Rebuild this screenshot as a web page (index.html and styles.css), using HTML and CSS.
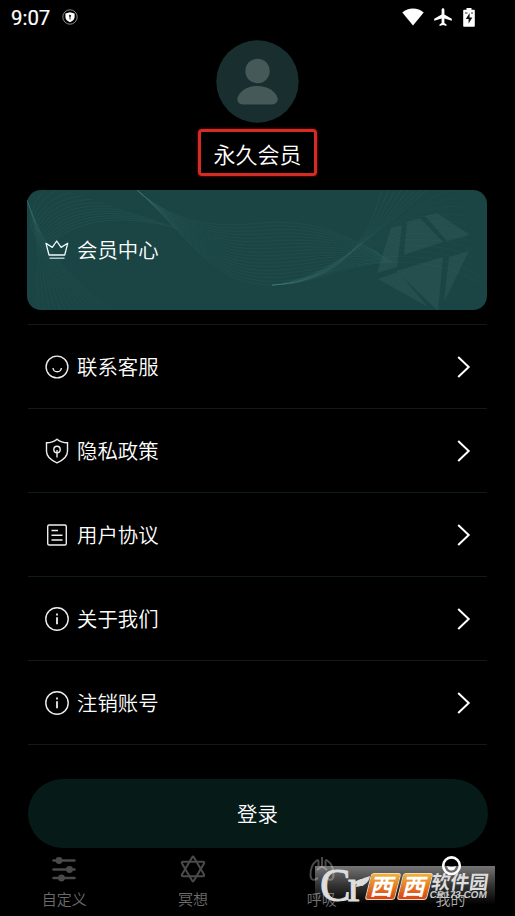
FILE: index.html
```html
<!DOCTYPE html>
<html lang="zh-CN">
<head>
<meta charset="utf-8">
<title>我的</title>
<link rel="stylesheet" href="styles.css">
</head>
<body>
<div class="screen">
  <header class="status">
    <span class="time">9:07</span>
    <svg class="status-shield" width="16" height="16" viewBox="0 0 16 16"><circle cx="8" cy="8" r="7.2" fill="none" stroke="#aaa" stroke-width=".8"/><path d="M8 3.200l4.600 1.300v3.600c0 2.500-2.100 4.200-4.600 5.100-2.500-.9-4.600-2.600-4.600-5.100V4.500z" fill="#fff"/><circle cx="8" cy="6.800" r="1.100" fill="#222"/><path d="M8 7v3.500" stroke="#222"/></svg>
    <span class="status-icons">
      <svg width="22" height="18" viewBox="0 0 22 18"><path d="M11 17.600L.3 4.600C3.300 2 7 .6 11 .6s7.700 1.400 10.700 4z" fill="#fff"/></svg>
      <svg width="18" height="18" viewBox="0 0 18 18"><path d="M9 .2c.8 0 1.400.7 1.400 1.500v4.700l7.400 4.400v1.900l-7.400-2.200v4.400l2.100 1.500v1.500L9 16.900l-3.500 1v-1.500l2.100-1.500v-4.400L.2 12.700v-1.900l7.400-4.400V1.700C7.600.9 8.200.2 9 .2z" fill="#fff"/></svg>
      <svg width="12" height="19" viewBox="0 0 12 19"><path d="M3.500 0h5v1.800h2.300c.6 0 1 .4 1 1v14.900c0 .6-.4 1-1 1H1.200c-.6 0-1-.4-1-1V2.800c0-.6.4-1 1-1h2.300z" fill="#fff"/><path d="M6.600 5L2.800 11h2.800v4.500L9.400 9.500H6.600z" fill="#111"/><path d="M2 5h2.500M8 5h2" stroke="#333"/></svg>
    </span>
  </header>

  <section class="profile">
    <svg class="avatar" width="83" height="83" viewBox="0 0 83 83"><circle cx="41.500" cy="41.500" r="41.200" fill="#192f2f"/><circle cx="41.500" cy="31" r="12.200" fill="#465959"/><path d="M27 64.500c-5.500 0-7-5-4.500-9C26 49.500 33 46 41.500 46S57 49.500 60.500 55.500c2.500 4 1 9-4.500 9z" fill="#465959"/></svg>
    <div class="nickname">永久会员</div>
  </section>

  <section class="vip">
    <svg class="vip-art" width="460" height="120" viewBox="0 0 460 120">
      <g fill="#254f4e">
        <path d="M364 38l11-3-5 42-20 6z"/>
        <path d="M380 32l13-4 23 24-39 13z"/>
        <path d="M398 26l12-3 33 22-23 6z"/>
        <path d="M351 89l20-7 30 35z"/>
        <path d="M369 81l47-14-5 54z"/>
        <path d="M422 67l20-6-25 51z"/>
      </g>
      <g id="waves" class="waves"></g>
    </svg>
    <svg class="vip-crown" width="24" height="20" viewBox="0 0 24 20"><path d="M4 15L1 3.300l6.300 4.100L11.700 1l4.400 6.400L22.700 3.300 19.700 15z" fill="none" stroke="#eefafa" stroke-width="1.300" stroke-linejoin="round"/><path d="M4.500 18.200h15" stroke="#c5dada" stroke-width="1.300"/></svg>
    <span>会员中心</span>
  </section>

  <nav class="menu">
    <a class="row"><svg class="row-icon" viewBox="0 0 24 24"><circle cx="12" cy="12" r="10.900"/><path d="M8 13c.4 2.500 2 3.800 4.200 3.800s3.800-1.300 4.200-3.800"/></svg><span>联系客服</span><svg class="chevron" viewBox="0 0 14 22"><path d="M1.200 1l10.500 10L1.200 21"/></svg></a>
    <a class="row"><svg class="row-icon tall" viewBox="0 0 24 26"><path d="M12 1.200c3 2.500 6.500 3.600 10.500 3.600v8.500c0 5.500-4.500 9-10.500 11.500C6 22.300 1.500 18.800 1.500 13.300V4.800c4 0 7.500-1.100 10.500-3.600z"/><circle cx="12" cy="11.500" r="3.200"/><path d="M12 12v7.500"/></svg><span>隐私政策</span><svg class="chevron" viewBox="0 0 14 22"><path d="M1.200 1l10.500 10L1.200 21"/></svg></a>
    <a class="row"><svg class="row-icon" viewBox="0 0 24 24"><rect x="2.700" y="2" width="18.600" height="20" rx="1.500"/><path d="M6.500 7.500h6.500M6.500 12.300h11M6.500 17h11"/></svg><span>用户协议</span><svg class="chevron" viewBox="0 0 14 22"><path d="M1.200 1l10.500 10L1.200 21"/></svg></a>
    <a class="row"><svg class="row-icon" viewBox="0 0 24 24"><circle cx="12" cy="12" r="11.200"/><path d="M12 6.500v2M12 10.300v7" stroke-width="1.800"/></svg><span>关于我们</span><svg class="chevron" viewBox="0 0 14 22"><path d="M1.200 1l10.500 10L1.200 21"/></svg></a>
    <a class="row"><svg class="row-icon" viewBox="0 0 24 24"><circle cx="12" cy="12" r="11.200"/><path d="M12 6.500v2M12 10.300v7" stroke-width="1.800"/></svg><span>注销账号</span><svg class="chevron" viewBox="0 0 14 22"><path d="M1.200 1l10.500 10L1.200 21"/></svg></a>
  </nav>

  <button class="login"><span>登录</span></button>

  <footer class="tabs">
    <div class="tab"><svg viewBox="0 0 28 28"><path d="M3.500 5.500h21M3.500 14.500h21M3.500 23h21" stroke-width="2.500" stroke-linecap="round"/><g fill="#4a4a4a" stroke="none"><circle cx="9" cy="5.500" r="3.400"/><circle cx="19.500" cy="14.500" r="3.400"/><circle cx="11.500" cy="23" r="3.400"/></g></svg><span>自定义</span></div>
    <div class="tab"><svg viewBox="0 0 28 28"><path d="M13.200 2.200L3 19.500q-.8 1.700 1 1.700h20q1.800 0 1-1.700L14.800 2.200q-.8-1.200-1.600 0z"/><path d="M13.200 25.800L3 8.500q-.8-1.700 1-1.700h20q1.800 0 1 1.700L14.800 25.800q-.8 1.200-1.600 0z"/></svg><span>冥想</span></div>
    <div class="tab"><svg viewBox="0 0 28 28"><path d="M14 2v9M14 11l-5 4M14 11l5 4M10.500 11V6.500q0-2-2-.8C4.500 8.500 2.500 14 2.500 20c0 4 2 5.500 4.500 4.500l3-1.500M17.500 11V6.500q0-2 2-.8c4 2.800 6 8.300 6 14.300 0 4-2 5.500-4.500 4.500l-3-1.500"/></svg><span>呼吸</span></div>
    <div class="tab active"><svg viewBox="0 0 28 28"><circle cx="14.500" cy="10.700" r="8.300"/><path d="M10 11q1 4.500 4.500 4.500T19 11q-4.500 2.200-9 0z" fill="#fff" stroke="none"/></svg><span>我的</span></div>
  </footer>

  <aside class="watermark">
    <span class="mark-cr">Cr</span>
    <svg class="leaf" width="14" height="12" viewBox="0 0 14 12"><path d="M0 11C1 3 6 3 14 0c-1 7-6 10-14 11z" fill="#ddd"/></svg>
    <span class="tile">西</span><span class="tile">西</span>
    <span class="mark-name"><b>软件园</b><i>CR173.COM</i></span>
  </aside>
</div>
<script src="waves.js"></script>
</body>
</html>
```
FILE: styles.css
```css
* { box-sizing: border-box; }
body {
  margin: 0;
  background: #000;
  color: #fff;
  font-family: "Noto Sans CJK SC", sans-serif;
  font-weight: 350;
}
svg { display: block; flex: none; }
.screen {
  position: relative;
  width: 515px;
  height: 916px;
  overflow: hidden;
  display: flex;
  flex-direction: column;
}
.status {
  height: 40px;
  padding: 0 39px 6px 11px;
  display: flex;
  align-items: center;
}
.time { font: 400 20.4px/24px Roboto, sans-serif; width: 39px; margin-top: 2px; -webkit-text-stroke: .2px #fff; }
.status-shield { margin-left: 12px; }
.status-icons { margin-left: auto; display: flex; align-items: center; gap: 10px; }
.status-icons svg:last-child { margin-left: 1px; }
.status-icons svg { position: relative; left: -1px; }
.profile { display: flex; flex-direction: column; align-items: center; height: 149px; }
.nickname {
  width: 119px;
  height: 47px;
  margin-top: 6px;
  border: 3px solid #d52b22;
  border-radius: 4px;
  box-shadow: 0 0 3px #8e1511;
  text-align: center;
  font-size: 22px;
  line-height: 43px;
}
.vip {
  position: relative;
  flex: none;
  width: 460px;
  height: 120px;
  margin: 1px 0 0 27px;
  padding-left: 18px;
  border-radius: 14px;
  overflow: hidden;
  background: #1b4545;
  display: flex;
  align-items: center;
  gap: 8px;
  font-size: 20.4px;
}
.vip-art { position: absolute; left: 0; top: 0; }
.vip-crown, .vip span { position: relative; }
.vip span, .row span, .login span { padding-bottom: 2px; }
.waves { fill: none; stroke: #4b827b; stroke-width: .5; }
.menu { margin: 14px 28px 0; border-top: 1px solid #101a1a; }
.row {
  display: flex;
  align-items: center;
  height: 84px;
  padding: 0 16px 0 17px;
  border-bottom: 1px solid #101a1a;
  font-size: 20.4px;
}
.row-icon { width: 24px; height: 24px; margin-right: 8px; fill: none; stroke: #eee; stroke-width: 1.4; }
.row-icon.tall { height: 26px; }
.chevron { width: 14px; height: 22px; margin-left: auto; fill: none; stroke: #fff; stroke-width: 2; }
.login {
  flex: none;
  display: flex;
  align-items: center;
  justify-content: center;
  width: 460px;
  height: 69px;
  margin: 34px 0 0 28px;
  padding: 0 1px 0 0;
  border: 0;
  border-radius: 35px;
  background: #061a18;
  color: #fff;
  font: 350 20.4px "Noto Sans CJK SC", sans-serif;
}
.tabs { display: flex; padding-top: 7px; }
.tab { flex: 1; display: flex; flex-direction: column; align-items: center; color: #6c6c6c; font-size: 15px; line-height: 22px; }
.tab svg { width: 28px; height: 28px; margin-bottom: 5px; fill: none; stroke: #4a4a4a; stroke-width: 2; }
.tab.active { color: #aaa; }
.tab.active svg { stroke: #fff; stroke-width: 2.6; }
.watermark {
  position: absolute;
  left: 315px;
  top: 866px;
  width: 180px;
  height: 39px;
  padding-left: 5px;
  display: flex;
  align-items: center;
  background: linear-gradient(rgba(255, 255, 255, .46), rgba(255, 255, 255, .2) 50%, rgba(255, 255, 255, 0));
}
.mark-cr { width: 40px; font: 46px/39px "Liberation Serif", serif; letter-spacing: -3px; color: #ddd; -webkit-text-stroke: 1px #ddd; }
.leaf { margin: -7px -7px 0 -4px; }
.tile {
  width: 30px;
  height: 27px;
  margin: 1px 0 0 2px;
  transform: skewX(-14deg);
  border: 1px solid #f6d9b4;
  border-radius: 3px;
  background: linear-gradient(#eeb33a, #e77a25 50%, #d84216);
  color: #fff;
  font-size: 23px;
  font-weight: 700;
  line-height: 23px;
  text-align: center;
}
.leaf + .tile { margin-left: 5px; }
.mark-name { display: flex; flex-direction: column; margin-left: 1px; transform: skewX(-8deg); color: #ddd; }
.mark-name b { font-size: 19px; line-height: 19px; }
.mark-name i { font: bold 10px/10px "Liberation Sans", sans-serif; color: #ccc; }
```
FILE: waves.js
```js
// Each ribbon blends between two curves: [from, to, line count, opacity]
const ribbons = [
  [[110,0, 150,34, 185,38, 235,33, 275,29, 310,40, 350,62],
   [110,0, 160,45, 185,95, 245,95, 290,95, 310,75, 365,72], 18, .25],
  [[245,95, 290,94, 335,75, 355,0],
   [245,95, 290,90, 330,62, 400,0], 8, .3],
  [[245,95, 290,94, 320,65, 400,10, 400,10, 420,0, 430,0],
   [245,95, 290,94, 310,72, 365,72, 400,72, 430,78, 455,95], 12, .15],
  [[3,38, 4,15, 12,5, 22,-5],
   [16,62, 40,30, 90,22, 150,38], 13, .28],
  [[0,10, 16,55, 8,80, 12,120],
   [0,10, 20,65, 45,90, 82,120], 14, .2]
];
const group = document.getElementById("waves");
for (const [from, to, count, opacity] of ribbons) {
  for (let i = 0; i < count; i++) {
    const p = from.map((v, k) => v + (to[k] - v) * i / (count - 1));
    const path = document.createElementNS("http://www.w3.org/2000/svg", "path");
    path.setAttribute("d", `M${p.slice(0, 2)}C${p.slice(2)}`);
    path.setAttribute("opacity", opacity);
    group.appendChild(path);
  }
}
```
